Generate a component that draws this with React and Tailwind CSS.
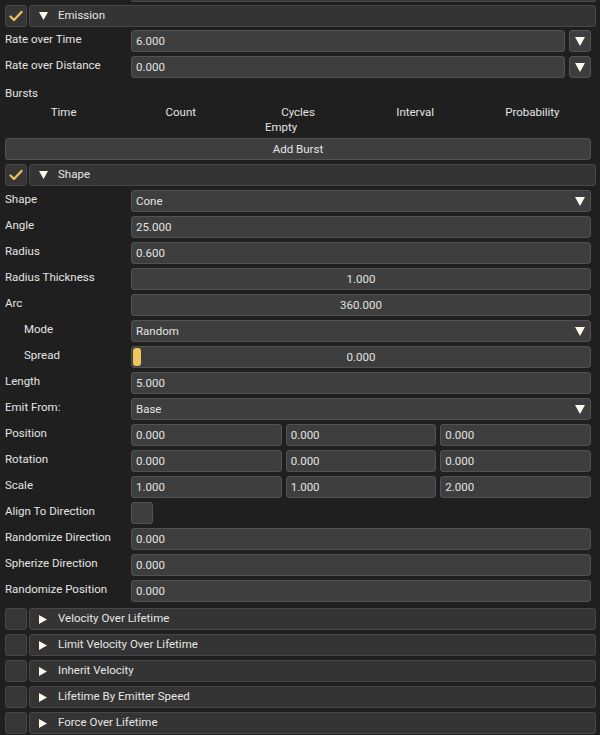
import React from "react";

const FONT = { fontFamily: "Roboto, 'Noto Sans', sans-serif" };

function Check() {
  return (
    <svg width="14" height="12" viewBox="0 0 14 12">
      <path d="M1.5 6.5 L5 10 L12.5 2" fill="none" stroke="#e6bf5c" strokeWidth="2.4" strokeLinecap="round" strokeLinejoin="round" />
    </svg>
  );
}

function Down({ size = 9 }) {
  return (
    <svg width={size} height={size - 1} viewBox="0 0 9 8">
      <path d="M0 0 H9 L4.5 8 Z" fill="#fdf8ee" />
    </svg>
  );
}

function Right() {
  return (
    <svg width="8" height="9" viewBox="0 0 8 9">
      <path d="M0 0 L8 4.5 L0 9 Z" fill="#fdf8ee" />
    </svg>
  );
}

function Header({ title, open, checked }) {
  return (
    <div className="flex h-[22px] gap-[2px] pr-[4px]">
      <div className="w-[22px] h-[22px] rounded-[3px] bg-[#363636] border border-[#474747] flex items-center justify-center">
        {checked && <Check />}
      </div>
      <div className="flex-1 h-[22px] rounded-[3px] bg-[#343434] border border-[#474747] flex items-center pl-[8px]">
        <div className="w-[10px] flex justify-center">{open ? <Down /> : <Right />}</div>
        <span className="ml-[10px] text-[11.5px] text-[#e6e6e6]">{title}</span>
      </div>
    </div>
  );
}

function Field({ value, center, caret, className = "" }) {
  return (
    <div className={`h-[22px] rounded-[3px] bg-[#3e3e3e] border border-[#525252] flex items-center px-[4px] text-[11.5px] text-[#e2e2e2] ${className}`}>
      <span className={`flex-1 pt-[2px] ${center ? "text-center" : "text-left"}`}>{value}</span>
      {caret && <span className="mr-[1px]"><Down size={10} /></span>}
    </div>
  );
}

function Row({ label, indent, children }) {
  return (
    <div className="flex h-[22px]">
      <div className={`w-[126px] shrink-0 text-[11.5px] leading-[18px] text-[#e4e4e4] ${indent ? "pl-[19px]" : ""}`}>{label}</div>
      <div className="flex-1 flex gap-[4px]">{children}</div>
    </div>
  );
}

function DropBtn() {
  return (
    <div className="w-[22px] h-[22px] rounded-[3px] bg-[#3e3e3e] border border-[#525252] flex items-center justify-center">
      <Down size={10} />
    </div>
  );
}

export default function App() {
  return (
    <div className="w-[600px] h-[735px] bg-[#1f1f1f] overflow-hidden pl-[5px] pr-[9px]" style={FONT}>
      <div className="ml-[126px] mr-[-5px] h-[2px] border-b border-x border-[#4a4a4a] bg-[#3a3a3a] rounded-b-[3px]" />
      <div className="mt-[3px] mr-[-9px]">
        <Header title="Emission" open checked />
      </div>
      <div className="mt-[3px] flex flex-col gap-[4px]">
        <Row label="Rate over Time">
          <Field value="6.000" className="flex-1" />
          <DropBtn />
        </Row>
        <Row label="Rate over Distance">
          <Field value="0.000" className="flex-1" />
          <DropBtn />
        </Row>
      </div>
      <div className="h-[18px] mt-[6px] text-[11.5px] leading-[18px] text-[#e4e4e4]">Bursts</div>
      <div className="grid grid-cols-5 mt-[2px] h-[16px] text-[11.5px] leading-[16px] text-[#e4e4e4] text-center">
        <span>Time</span>
        <span>Count</span>
        <span>Cycles</span>
        <span>Interval</span>
        <span>Probability</span>
      </div>
      <div className="h-[14px] text-[11.5px] leading-[14px] text-[#e4e4e4] pl-[260px]">Empty</div>
      <div className="mt-[4px] h-[22px] rounded-[3px] bg-[#3e3e3e] border border-[#525252] flex items-center justify-center text-[11.5px] text-[#e4e4e4] pt-[1px]">Add Burst</div>
      <div className="mt-[4px] mr-[-9px]">
        <Header title="Shape" open checked />
      </div>
      <div className="mt-[4px] flex flex-col gap-[4px]">
        <Row label="Shape"><Field value="Cone" caret className="flex-1" /></Row>
        <Row label="Angle"><Field value="25.000" className="flex-1" /></Row>
        <Row label="Radius"><Field value="0.600" className="flex-1" /></Row>
        <Row label="Radius Thickness"><Field value="1.000" center className="flex-1" /></Row>
        <Row label="Arc"><Field value="360.000" center className="flex-1" /></Row>
        <Row label="Mode" indent><Field value="Random" caret className="flex-1" /></Row>
        <Row label="Spread" indent>
          <div className="flex-1 relative h-[22px] rounded-[3px] bg-[#3e3e3e] border border-[#525252] flex items-center justify-center text-[11.5px] text-[#e2e2e2]">
            <div className="absolute left-[1px] top-[1px] w-[8px] h-[18px] rounded-[3px] bg-[#efc65e]" />
            <span className="pt-[2px]">0.000</span>
          </div>
        </Row>
        <Row label="Length"><Field value="5.000" className="flex-1" /></Row>
        <Row label="Emit From:"><Field value="Base" caret className="flex-1" /></Row>
        <Row label="Position">
          <Field value="0.000" className="flex-1" />
          <Field value="0.000" className="flex-1" />
          <Field value="0.000" className="flex-1" />
        </Row>
        <Row label="Rotation">
          <Field value="0.000" className="flex-1" />
          <Field value="0.000" className="flex-1" />
          <Field value="0.000" className="flex-1" />
        </Row>
        <Row label="Scale">
          <Field value="1.000" className="flex-1" />
          <Field value="1.000" className="flex-1" />
          <Field value="2.000" className="flex-1" />
        </Row>
        <Row label="Align To Direction">
          <div className="w-[22px] h-[22px] rounded-[3px] bg-[#3e3e3e] border border-[#525252]" />
        </Row>
        <Row label="Randomize Direction"><Field value="0.000" className="flex-1" /></Row>
        <Row label="Spherize Direction"><Field value="0.000" className="flex-1" /></Row>
        <Row label="Randomize Position"><Field value="0.000" className="flex-1" /></Row>
      </div>
      <div className="mt-[6px] mr-[-9px] flex flex-col gap-[4px]">
        <Header title="Velocity Over Lifetime" />
        <Header title="Limit Velocity Over Lifetime" />
        <Header title="Inherit Velocity" />
        <Header title="Lifetime By Emitter Speed" />
        <Header title="Force Over Lifetime" />
      </div>
    </div>
  );
}
